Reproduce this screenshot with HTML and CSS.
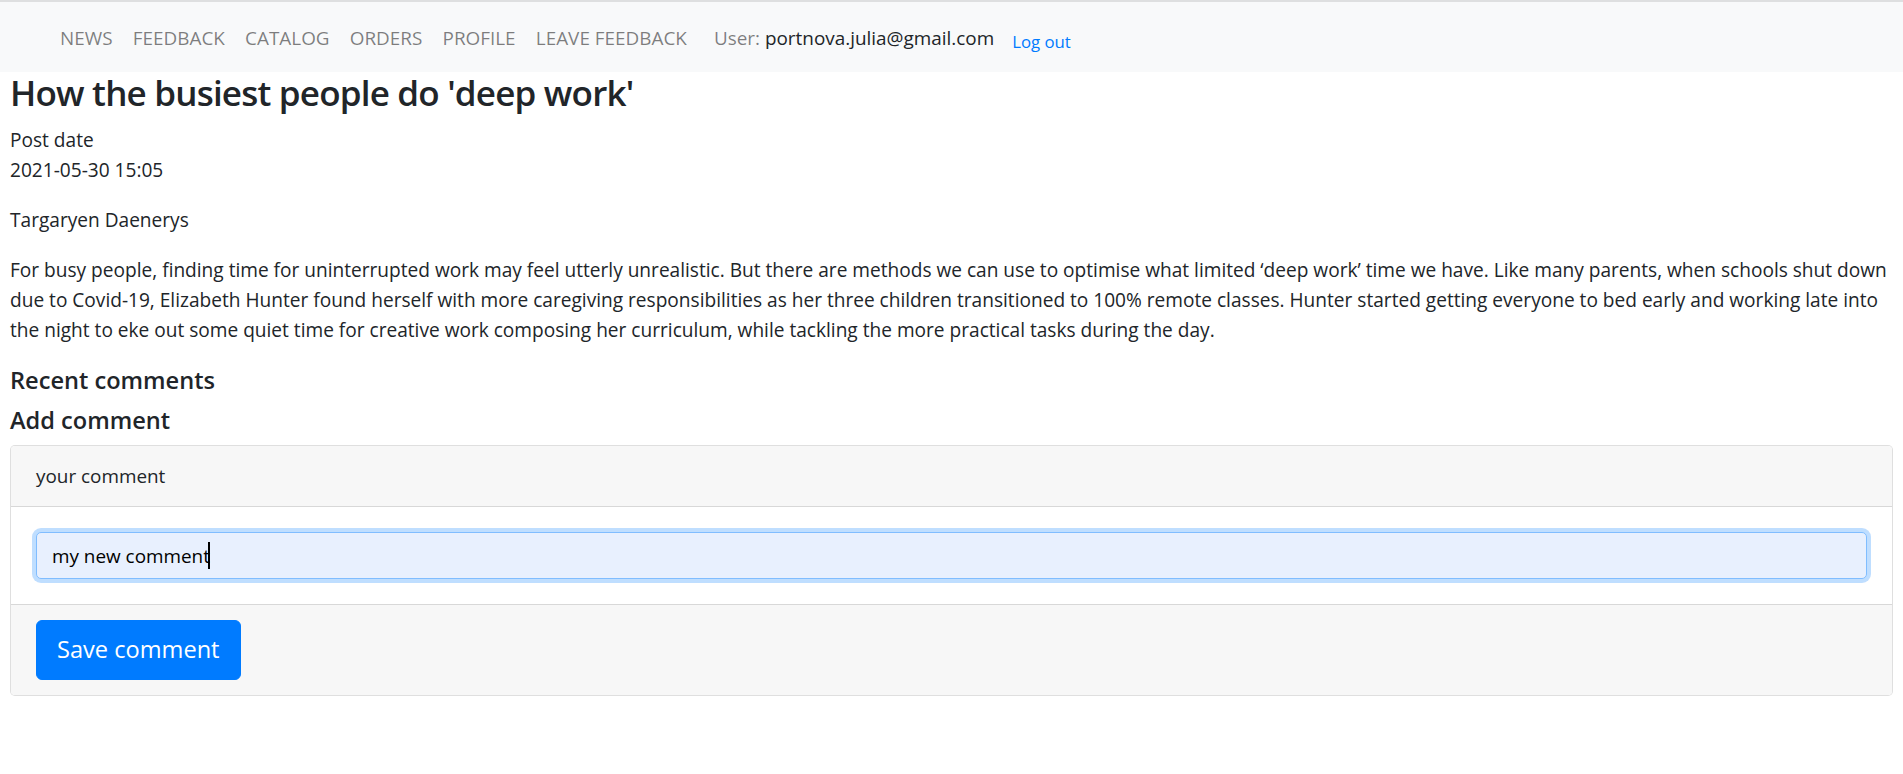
FILE: index.html
```html
<!DOCTYPE html>
<html lang="en">
<head>
<meta charset="utf-8">
<title>How the busiest people do 'deep work'</title>
<link rel="stylesheet" href="styles.css">
</head>
<body>
<nav class="navbar">
  <ul class="nav-list">
    <li><a class="nav-link" href="#">NEWS</a></li>
    <li><a class="nav-link" href="#">FEEDBACK</a></li>
    <li><a class="nav-link" href="#">CATALOG</a></li>
    <li><a class="nav-link" href="#">ORDERS</a></li>
    <li><a class="nav-link" href="#">PROFILE</a></li>
    <li><a class="nav-link" href="#">LEAVE FEEDBACK</a></li>
  </ul>
  <span class="navbar-text">User: <span class="user-email">portnova.julia@gmail.com</span></span>
  <a class="logout" href="#">Log out</a>
</nav>
<main class="content">
  <h2 class="post-title">How the busiest people do 'deep work'</h2>
  <div class="post-label">Post date</div>
  <p class="para">2021-05-30 15:05</p>
  <p class="para">Targaryen Daenerys</p>
  <p class="para">For busy people, finding time for uninterrupted work may feel utterly unrealistic. But there are methods we can use to optimise what limited ‘deep work’ time we have. Like many parents, when schools shut down due to Covid-19, Elizabeth Hunter found herself with more caregiving responsibilities as her three children transitioned to 100% remote classes. Hunter started getting everyone to bed early and working late into the night to eke out some quiet time for creative work composing her curriculum, while tackling the more practical tasks during the day.</p>
  <h5 class="section-title">Recent comments</h5>
  <h5 class="section-title">Add comment</h5>
  <form class="card">
    <div class="card-header">your comment</div>
    <div class="card-body">
      <div class="input-wrap">
        <input id="comment" class="form-control" type="text" value="my new comment">
        <span id="caret" class="caret"></span>
      </div>
    </div>
    <div class="card-footer">
      <button type="button" class="btn-save">Save comment</button>
    </div>
  </form>
</main>
<script src="script.js"></script>
</body>
</html>
```
FILE: styles.css
```css
* { box-sizing: border-box; }
html, body { margin: 0; padding: 0; }
body {
  font-family: "Open Sans", "Noto Sans", sans-serif;
  font-size: 19.1px;
  line-height: 30px;
  color: #212529;
  background: #fff;
}
.navbar {
  display: flex;
  align-items: flex-start;
  height: 72px;
  padding: 21px 0 0 0;
  background: #f8f9fa;
  border-top: 2px solid #dedfe0;
}
.nav-list {
  display: flex;
  list-style: none;
  margin: 0;
  padding: 0 0 0 50px;
  font-size: 18.9px;
}
.nav-link {
  display: block;
  padding: 0 10.1px;
  color: rgba(0,0,0,.5);
  text-decoration: none;
}
.navbar-text {
  margin-left: 17px;
  font-size: 18.9px;
  color: rgba(0,0,0,.5);
}
.user-email { color: #212529; }
.logout {
  margin-left: 18px;
  padding-top: 4px;
  font-size: 16.8px;
  color: #007bff;
  text-decoration: none;
}
.content {
  padding: 0 10px;
}
.post-title {
  margin: 0 0 11px 0;
  font-size: 35px;
  line-height: 42px;
  font-weight: 600;
  letter-spacing: -0.8px;
}
.para { margin: 0 0 20px 0; }
.section-title {
  margin: 0 0 10px 0;
  font-size: 23.6px;
  line-height: 30px;
  font-weight: 600;
  letter-spacing: 0;
}
.card {
  display: flex;
  flex-direction: column;
  border: 1px solid rgba(0,0,0,.125);
  border-radius: 5px;
  background: #fff;
  overflow: hidden;
}
.card-header {
  padding: 15px 25px;
  font-size: 18.9px;
  background: #f7f7f7;
  border-bottom: 1px solid rgba(0,0,0,.125);
}
.card-body {
  padding: 25px;
}
.input-wrap {
  position: relative;
}
.form-control {
  display: block;
  width: 100%;
  height: 47px;
  padding: 0 15px;
  font-family: inherit;
  font-size: 18.9px;
  color: #000;
  background: #e8f0fe;
  border: 1px solid #80bdff;
  border-radius: 5px;
  box-shadow: 0 0 0 4px rgba(0,123,255,.25);
  outline: none;
  caret-color: transparent;
}
.caret {
  position: absolute;
  top: 10px;
  left: 172px;
  width: 2px;
  height: 27px;
  background: #000;
}
.card-footer {
  padding: 15px 25px;
  background: #f7f7f7;
  border-top: 1px solid rgba(0,0,0,.125);
}
.btn-save {
  display: inline-block;
  padding: 10px 20px;
  font-family: inherit;
  font-size: 23.6px;
  line-height: 37.5px;
  color: #fff;
  background: #007bff;
  border: 1px solid #007bff;
  border-radius: 6px;
  cursor: pointer;
}
```
FILE: script.js
```js
var el = document.getElementById('comment');
var caret = document.getElementById('caret');
var cs = getComputedStyle(el);
var ctx = document.createElement('canvas').getContext('2d');
ctx.font = cs.fontWeight + ' ' + cs.fontSize + ' ' + cs.fontFamily;
var w = ctx.measureText(el.value).width;
caret.style.left = (16 + w - 2) + 'px';
```
